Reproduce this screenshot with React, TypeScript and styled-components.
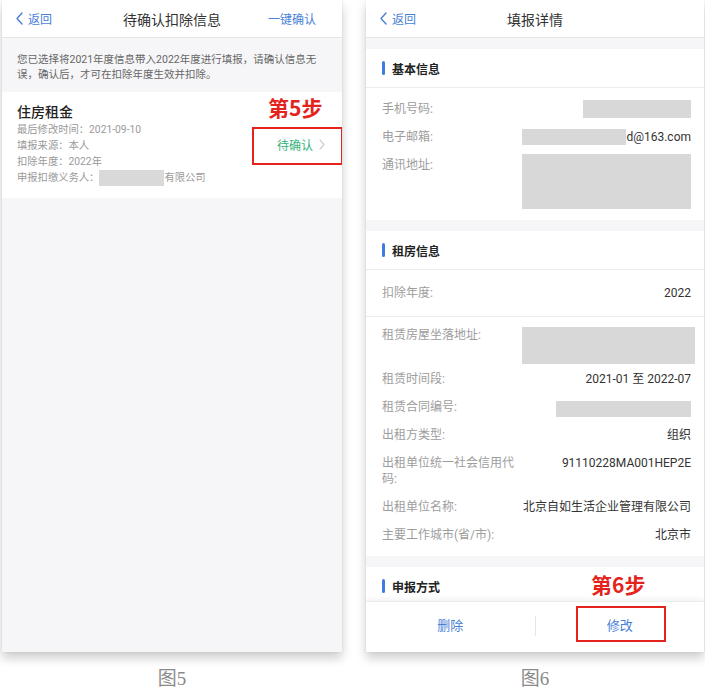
import styled, { createGlobalStyle } from "styled-components";

const GlobalStyle = createGlobalStyle`
  html, body {
    margin: 0;
    padding: 0;
    background: #fff;
  }
  body {
    font-family: Roboto, "Noto Sans CJK SC", sans-serif;
    color: #333;
  }
`;

const BLUE = "#4a7fd8";
const RED = "#e3231c";

type Placeholder = { w: number; h: number; mt?: number; mb?: number; mr?: number };
type DetailRow = {
  label: string;
  value?: string;
  block?: Placeholder;
  py?: number;
};

const basicRows: DetailRow[] = [
  { label: "手机号码:", block: { w: 108, h: 18, mt: -1, mb: -1 } },
  { label: "电子邮箱:", block: { w: 104, h: 16 }, value: "d@163.com" },
  { label: "通讯地址:", block: { w: 169, h: 55, mt: -3 } },
];

const rentRows: DetailRow[] = [
  { label: "租赁房屋坐落地址:", block: { w: 173, h: 37, mb: -5, mr: -4 } },
  { label: "租赁时间段:", value: "2021-01 至 2022-07" },
  { label: "租赁合同编号:", block: { w: 135, h: 16, mt: 2, mb: -2 } },
  { label: "出租方类型:", value: "组织" },
  { label: "出租单位统一社会信用代码:", value: "91110228MA001HEP2E" },
  { label: "出租单位名称:", value: "北京自如生活企业管理有限公司" },
  { label: "主要工作城市(省/市):", value: "北京市" },
];

const Chevron = ({ color }: { color: string }) => (
  <svg width="7" height="13" viewBox="0 0 7 13" fill="none">
    <path d="M6 1 L1 6.5 L6 12" stroke={color} strokeWidth="1.4" strokeLinecap="round" strokeLinejoin="round" />
  </svg>
);

const ChevronRight = () => (
  <svg width="6" height="11" viewBox="0 0 6 11" fill="none">
    <path d="M1 1 L5 5.5 L1 10" stroke="#bdbdbd" strokeWidth="1.1" strokeLinecap="round" strokeLinejoin="round" />
  </svg>
);

const DetailRows = ({ rows }: { rows: DetailRow[] }) => (
  <>
    {rows.map((row) => (
      <Row key={row.label} $py={row.py ?? 6}>
        <Label>{row.label}</Label>
        <Value>
          {row.block && (
            <Redacted
              $w={row.block.w}
              $h={row.block.h}
              $mt={row.block.mt ?? 0}
              $mb={row.block.mb ?? 0}
              $mr={row.block.mr ?? 0}
            />
          )}
          {row.value && <span>{row.value}</span>}
        </Value>
      </Row>
    ))}
  </>
);

const PendingScreen = () => (
  <Phone>
    <NavBar>
      <BackLink>
        <Chevron color={BLUE} />
        返回
      </BackLink>
      <NavTitle>待确认扣除信息</NavTitle>
      <NavAction>一键确认</NavAction>
    </NavBar>
    <Notice>
      您已选择将2021年度信息带入2022年度进行填报，请确认信息无误，确认后，才可在扣除年度生效并扣除。
    </Notice>
    <Card>
      <div>
        <CardTitle>住房租金</CardTitle>
        <CardLine>最后修改时间：2021-09-10</CardLine>
        <CardLine>填报来源：本人</CardLine>
        <CardLine>扣除年度：2022年</CardLine>
        <CardLine>
          申报扣缴义务人：
          <InlineRedacted />
          有限公司
        </CardLine>
      </div>
      <Status>
        待确认
        <ChevronRight />
      </Status>
    </Card>
    <StepMark $left={250} $top={127} $width={91} $height={38} />
    <StepLabel $left={266} $top={94}>第5步</StepLabel>
  </Phone>
);

const DetailScreen = () => (
  <Phone>
    <NavBar>
      <BackLink>
        <Chevron color={BLUE} />
        返回
      </BackLink>
      <NavTitle>填报详情</NavTitle>
      <span />
    </NavBar>
    <Content>
      <Section>
        <SectionHeader>基本信息</SectionHeader>
        <Group $pt={7} $pb={5}>
          <DetailRows rows={basicRows} />
        </Group>
      </Section>
      <Section>
        <SectionHeader>租房信息</SectionHeader>
        <Group $pt={0} $pb={0} $divided>
          <DetailRows rows={[{ label: "扣除年度:", value: "2022", py: 15 }]} />
        </Group>
        <Group $pt={4} $pb={7}>
          <DetailRows rows={rentRows} />
        </Group>
      </Section>
      <Section>
        <SectionHeader>申报方式</SectionHeader>
      </Section>
    </Content>
    <BottomBar>
      <BarButton>删除</BarButton>
      <BarDivider />
      <BarButton>修改</BarButton>
    </BottomBar>
    <StepMark $left={210} $top={606} $width={90} $height={36} />
    <StepLabel $left={225} $top={571}>第6步</StepLabel>
  </Phone>
);

const App = () => (
  <>
    <GlobalStyle />
    <Page>
      <Figure $width={340}>
        <PendingScreen />
        <Caption>图5</Caption>
      </Figure>
      <Figure $width={338}>
        <DetailScreen />
        <Caption>图6</Caption>
      </Figure>
    </Page>
  </>
);

const Page = styled.div`
  display: flex;
  align-items: flex-start;
  gap: 24px;
  padding-left: 2px;
  width: 705px;
  height: 695px;
  box-sizing: border-box;
  overflow: hidden;
`;

const Figure = styled.div<{ $width: number }>`
  width: ${(p) => p.$width}px;
  flex-shrink: 0;
  display: flex;
  flex-direction: column;
`;

const Phone = styled.div`
  position: relative;
  height: 652px;
  background: #f6f6f8;
  display: flex;
  flex-direction: column;
  overflow: hidden;
  box-shadow: 0 6px 10px rgba(0, 0, 0, 0.2), 0 0 2px rgba(0, 0, 0, 0.08);
`;

const Caption = styled.div`
  margin-top: 15px;
  text-align: center;
  font-family: "Liberation Serif", "Noto Sans CJK SC", serif;
  font-size: 19px;
  line-height: 24px;
  color: #8a8a8a;
`;

const NavBar = styled.div`
  height: 38px;
  flex-shrink: 0;
  box-sizing: border-box;
  background: #fff;
  border-bottom: 1px solid #e6e6e8;
  display: grid;
  grid-template-columns: 1fr auto 1fr;
  align-items: center;
  padding: 0 14px;
`;

const BackLink = styled.div`
  display: flex;
  align-items: center;
  gap: 5px;
  font-size: 12px;
  color: ${BLUE};
`;

const NavTitle = styled.div`
  font-size: 14px;
  color: #333;
`;

const NavAction = styled.div`
  justify-self: end;
  padding-right: 12px;
  font-size: 12px;
  color: ${BLUE};
`;

const Notice = styled.div`
  padding: 14px 25px 10px 15px;
  font-size: 10.5px;
  line-height: 15px;
  color: #666;
`;

const Card = styled.div`
  background: #fff;
  padding: 10px 17px 12px 15px;
  display: flex;
  align-items: center;
  justify-content: space-between;
`;

const CardTitle = styled.div`
  font-size: 14px;
  line-height: 20px;
  font-weight: 500;
  color: #222;
`;

const CardLine = styled.div`
  display: flex;
  align-items: center;
  font-size: 10.3px;
  line-height: 16px;
  color: #9a9a9a;
`;

const InlineRedacted = styled.span`
  display: inline-block;
  width: 65px;
  height: 16px;
  background: #d9d9d9;
`;

const Status = styled.div`
  display: flex;
  align-items: center;
  gap: 6px;
  font-size: 12px;
  color: #35b27b;
`;

const StepMark = styled.div<{ $left: number; $top: number; $width: number; $height: number }>`
  position: absolute;
  left: ${(p) => p.$left}px;
  top: ${(p) => p.$top}px;
  width: ${(p) => p.$width}px;
  height: ${(p) => p.$height}px;
  box-sizing: border-box;
  border: 2px solid ${RED};
  z-index: 2;
  pointer-events: none;
`;

const StepLabel = styled.div<{ $left: number; $top: number }>`
  position: absolute;
  left: ${(p) => p.$left}px;
  top: ${(p) => p.$top}px;
  font-family: "Noto Sans CJK SC", sans-serif;
  font-size: 21px;
  line-height: 26px;
  font-weight: 700;
  color: ${RED};
  z-index: 2;
`;

const Content = styled.div`
  flex: 1;
  min-height: 0;
  overflow: hidden;
  display: flex;
  flex-direction: column;
  gap: 11px;
  padding-top: 11px;
`;

const Section = styled.section`
  flex-shrink: 0;
  background: #fff;
`;

const SectionHeader = styled.div`
  height: 39px;
  box-sizing: border-box;
  border-bottom: 1px solid #ececee;
  display: flex;
  align-items: center;
  gap: 7px;
  padding-left: 16px;
  font-size: 12px;
  font-weight: 700;
  color: #222;

  &::before {
    content: "";
    width: 3px;
    height: 14px;
    border-radius: 2px;
    background: #3f7ce0;
  }
`;

const Group = styled.div<{ $pt: number; $pb: number; $divided?: boolean }>`
  padding: ${(p) => p.$pt}px 13px ${(p) => p.$pb}px 16px;
  border-bottom: ${(p) => (p.$divided ? "1px solid #ececee" : "none")};
`;

const Row = styled.div<{ $py: number }>`
  display: flex;
  align-items: flex-start;
  padding: ${(p) => p.$py}px 0;
  font-size: 12px;
  line-height: 16px;
`;

const Label = styled.div`
  width: 136px;
  flex-shrink: 0;
  color: #9d9d9d;
`;

const Value = styled.div`
  flex: 1;
  display: flex;
  justify-content: flex-end;
  align-items: flex-start;
  text-align: right;
  color: #333;
`;

const Redacted = styled.span<{ $w: number; $h: number; $mt: number; $mb: number; $mr: number }>`
  display: block;
  flex-shrink: 0;
  width: ${(p) => p.$w}px;
  height: ${(p) => p.$h}px;
  margin: ${(p) => p.$mt}px ${(p) => p.$mr}px ${(p) => p.$mb}px 0;
  background: #d8d8d8;
`;

const BottomBar = styled.div`
  position: relative;
  z-index: 1;
  height: 51px;
  flex-shrink: 0;
  box-sizing: border-box;
  padding-bottom: 3px;
  background: #fff;
  border-top: 1px solid #ececee;
  box-shadow: 0 -2px 5px rgba(0, 0, 0, 0.06);
  display: flex;
  align-items: center;
`;

const BarButton = styled.div`
  flex: 1;
  text-align: center;
  font-size: 13px;
  line-height: 20px;
  color: ${BLUE};
`;

const BarDivider = styled.div`
  width: 1px;
  height: 20px;
  background: #e6e6e6;
`;

export default App;
